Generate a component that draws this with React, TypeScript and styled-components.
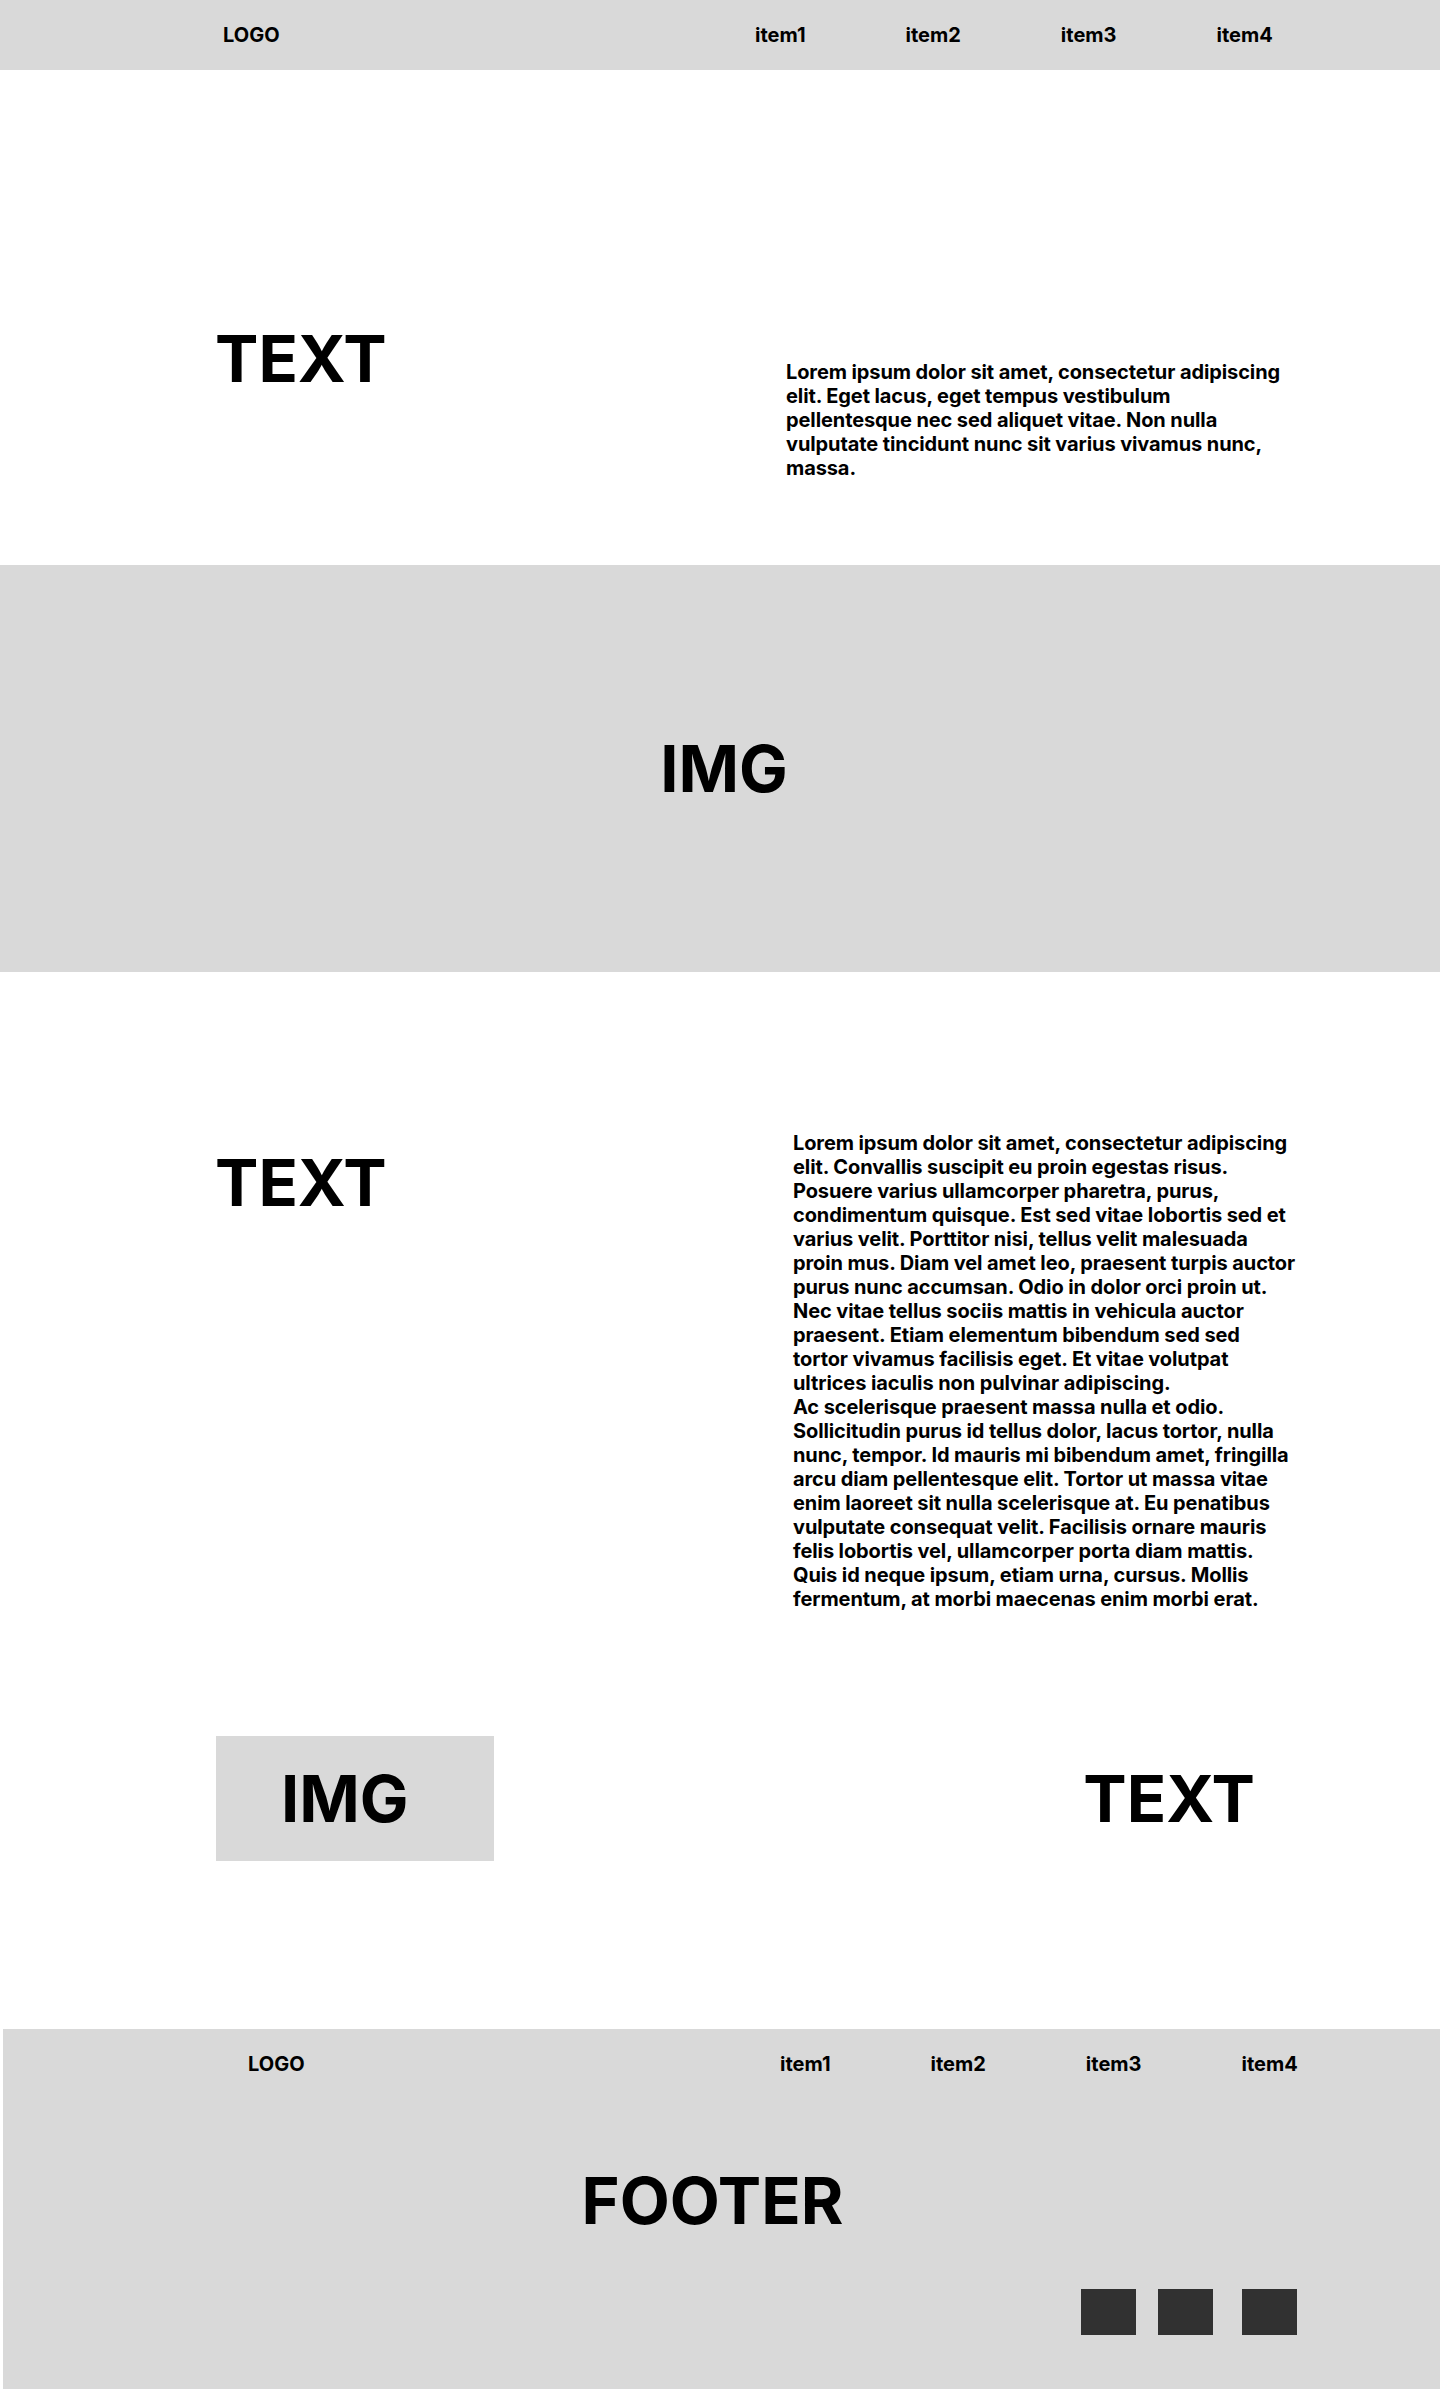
import React from 'react';
import styled, { createGlobalStyle } from 'styled-components';

const GlobalStyle = createGlobalStyle`
  body {
    margin: 0;
    font-family: Inter, 'Noto Sans', sans-serif;
    color: #000;
    background: #fff;
  }
`;

const navItems = ['item1', 'item2', 'item3', 'item4'];

const introText =
  'Lorem ipsum dolor sit amet, consectetur adipiscing elit. Eget lacus, eget tempus vestibulum pellentesque nec sed aliquet vitae. Non nulla vulputate tincidunt nunc sit varius vivamus nunc, massa.';

const longText = [
  'Lorem ipsum dolor sit amet, consectetur adipiscing elit. Convallis suscipit eu proin egestas risus. Posuere varius ullamcorper pharetra, purus, condimentum quisque. Est sed vitae lobortis sed et varius velit. Porttitor nisi, tellus velit malesuada proin mus. Diam vel amet leo, praesent turpis auctor purus nunc accumsan. Odio in dolor orci proin ut. Nec vitae tellus sociis mattis in vehicula auctor praesent. Etiam elementum bibendum sed sed tortor vivamus facilisis eget. Et vitae volutpat ultrices iaculis non pulvinar adipiscing.',
  'Ac scelerisque praesent massa nulla et odio. Sollicitudin purus id tellus dolor, lacus tortor, nulla nunc, tempor. Id mauris mi bibendum amet, fringilla arcu diam pellentesque elit. Tortor ut massa vitae enim laoreet sit nulla scelerisque at. Eu penatibus vulputate consequat velit. Facilisis ornare mauris felis lobortis vel, ullamcorper porta diam mattis. Quis id neque ipsum, etiam urna, cursus. Mollis fermentum, at morbi maecenas enim morbi erat.',
];

const NavRow = ({ shift }: { shift: number }) => (
  <Nav $shift={shift}>
    <Logo>LOGO</Logo>
    <NavList>
      {navItems.map((item) => (
        <NavLink key={item}>{item}</NavLink>
      ))}
    </NavList>
  </Nav>
);

const App = () => {
  return (
    <>
      <GlobalStyle />
      <Header>
        <NavRow shift={223} />
      </Header>

      <Hero>
        <Split $headTop={0} $paraTop={40} $paraLeft={571}>
          <BigTitle>TEXT</BigTitle>
          <Paragraph>{introText}</Paragraph>
        </Split>
      </Hero>

      <Banner>
        <BigTitle>IMG</BigTitle>
      </Banner>

      <Content>
        <Split $headTop={13} $paraTop={0} $paraLeft={578}>
          <BigTitle>TEXT</BigTitle>
          <Paragraph>
            {longText[0]}
            <br />
            {longText[1]}
          </Paragraph>
        </Split>
        <MediaRow>
          <ImgBox>
            <BigTitle>IMG</BigTitle>
          </ImgBox>
          <BigTitle>TEXT</BigTitle>
        </MediaRow>
      </Content>

      <Footer>
        <NavRow shift={245} />
        <FooterTitle>FOOTER</FooterTitle>
        <Socials>
          <Square $space={0} />
          <Square $space={22} />
          <Square $space={29} />
        </Socials>
      </Footer>
    </>
  );
};

const Header = styled.header`
  background: #d9d9d9;
  height: 70px;
`;

const Nav = styled.nav<{ $shift: number }>`
  height: 70px;
  display: flex;
  align-items: center;
  padding-left: ${({ $shift }) => $shift}px;
  box-sizing: border-box;
`;

const Logo = styled.div`
  width: 532px;
  font-size: 20px;
  font-weight: 700;
  line-height: 24px;
`;

const NavList = styled.div`
  display: flex;
  gap: 100px;
`;

const NavLink = styled.a`
  font-size: 20px;
  font-weight: 700;
  line-height: 24px;
  cursor: pointer;
`;

const Hero = styled.section`
  height: 495px;
  padding-top: 250px;
  box-sizing: border-box;
`;

const Split = styled.div<{ $headTop: number; $paraTop: number; $paraLeft: number }>`
  display: grid;
  grid-template-columns: ${({ $paraLeft }) => $paraLeft}px 506px;
  align-items: start;
  padding-left: 215px;

  & > h2 {
    margin-top: ${({ $headTop }) => $headTop}px;
  }
  & > p {
    margin-top: ${({ $paraTop }) => $paraTop}px;
  }
`;

const BigTitle = styled.h2`
  margin: 0;
  font-size: 65px;
  font-weight: 700;
  line-height: 78px;
`;

const Paragraph = styled.p`
  margin: 0;
  font-size: 20px;
  font-weight: 700;
  line-height: 24px;
  letter-spacing: -0.005em;
`;

const Banner = styled.section`
  height: 407px;
  background: #d9d9d9;
  display: flex;
  align-items: center;
  justify-content: center;
  padding-left: 8px;
  box-sizing: border-box;
`;

const Content = styled.section`
  height: 1057px;
  padding-top: 159px;
  box-sizing: border-box;
`;

const MediaRow = styled.div`
  margin-top: 125px;
  display: flex;
  align-items: center;
  justify-content: space-between;
  padding: 0 185px 0 216px;
`;

const ImgBox = styled.div`
  width: 278px;
  height: 125px;
  background: #d9d9d9;
  display: flex;
  align-items: center;
  padding-left: 65px;
  box-sizing: border-box;
`;

const Footer = styled.footer`
  margin-left: 3px;
  height: 360px;
  background: #d9d9d9;
  display: flex;
  flex-direction: column;
`;

const FooterTitle = styled.h2`
  margin: 63px 0 0;
  text-align: center;
  padding-right: 18px;
  font-size: 65px;
  font-weight: 700;
  line-height: 78px;
`;

const Socials = styled.div`
  margin-top: 49px;
  display: flex;
  justify-content: flex-end;
  padding-right: 143px;
`;

const Square = styled.span<{ $space: number }>`
  width: 55px;
  height: 46px;
  margin-left: ${({ $space }) => $space}px;
  background: #313131;
`;

export default App;
